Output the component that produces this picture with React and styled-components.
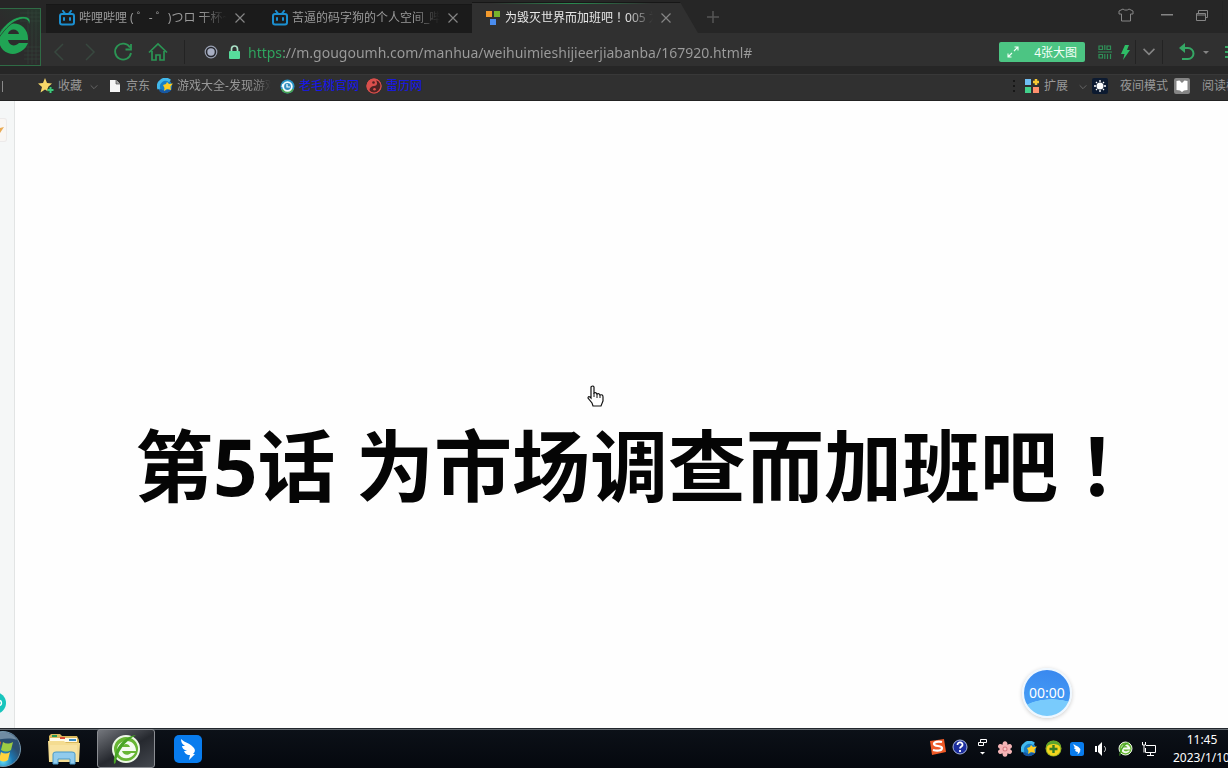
import React from 'react'
import styled, { createGlobalStyle } from 'styled-components'

const GlobalStyle = createGlobalStyle`
  * {
    box-sizing: border-box;
  }
  body {
    margin: 0;
    font-family: 'Noto Sans', 'Noto Sans CJK SC', sans-serif;
    font-size: 12px;
    background: #fefefe;
    overflow: hidden;
  }
  button {
    border: 0;
    padding: 0;
    background: none;
    font: inherit;
    color: inherit;
  }
  svg {
    display: block;
    flex-shrink: 0;
  }
`

const Screen = styled.div`
  display: flex;
  flex-direction: column;
  min-height: 100vh;
  overflow: hidden;
`

const Chrome = styled.header`
  background: #262626;
  color: #999999;
`

const TopArea = styled.div`
  display: grid;
  grid-template-columns: 41px minmax(0, 1fr);
  height: 66px;
`

const Logo = styled.button`
  margin-top: 8px;
  border: 1px solid #2f6b45;
  border-left: 0;
  background: linear-gradient(45deg, #2c2c2c 50%, #26372d 100%);
  overflow: hidden;
`

const Bars = styled.div`
  display: flex;
  flex-direction: column;
`

const TabStrip = styled.div`
  display: flex;
  align-items: flex-end;
  height: 33px;
  padding-left: 5px;
`

const Tab = styled.div`
  display: flex;
  align-items: center;
  position: relative;
  height: ${({ $active }) => ($active ? '31px' : '29px')};
  width: ${({ $active }) => ($active ? '226px' : '213px')};
  padding-left: 13px;
  padding-bottom: ${({ $active }) => ($active ? '1px' : '3px')};
  color: ${({ $active }) => ($active ? '#e8e8e8' : '#9a9a9a')};
  background: ${({ $active }) => ($active ? '#303030' : '#1b1b1b')};
  border-top: 1px solid #171717;
  clip-path: ${({ $active }) => ($active ? 'polygon(0 0, 208px 0, 100% 100%, 0 100%)' : 'none')};
`

const TabGlow = styled.span`
  position: absolute;
  top: 0;
  left: 20px;
  width: 160px;
  height: 1px;
  background: linear-gradient(90deg, transparent, #2a8a50, transparent);
`

const TabTitle = styled.span`
  width: 148px;
  margin: 0 8px 0 4px;
  line-height: 20px;
  white-space: nowrap;
  overflow: hidden;
  mask-image: linear-gradient(90deg, #000 82%, transparent 100%);
`

// full-width marks sit in the middle of their square in this family
const Mark = styled.span`
  font-family: 'Noto Sans CJK TC', sans-serif;
`

const IconButton = styled.button`
  display: flex;
  align-items: center;
  justify-content: center;
  flex-shrink: 0;
  gap: 8px;
  width: ${({ $width }) => $width || 30}px;
  height: 28px;
  color: ${({ $color }) => $color || '#858585'};
`

const WindowButtons = styled.div`
  display: flex;
  height: 30px;
  margin-left: auto;
  align-self: flex-start;
  padding-top: 1px;
`

const AddressBar = styled.div`
  display: flex;
  align-items: center;
  height: 33px;
  padding: 5px 0 0 4px;
  background: #303030;
`

const Divider = styled.span`
  width: 1px;
  height: 24px;
  margin: 0 ${({ $gap }) => $gap || 0}px;
  background: #232323;
`

const AddressField = styled.label`
  display: flex;
  align-items: center;
  flex: 1;
  min-width: 0;
  gap: 7px;
`

const AddressInput = styled.input`
  flex: 1;
  min-width: 0;
  height: 26px;
  padding: 0;
  border: 0;
  outline: 0;
  font-family: 'Noto Sans', sans-serif;
  font-size: 14px;
  color: transparent;
  background: linear-gradient(90deg, #2fa75f 36px, #9c9c9c 36px);
  background-clip: text;
`

const PictureButton = styled.button`
  display: flex;
  align-items: center;
  justify-content: space-between;
  width: 86px;
  height: 20px;
  margin-right: 10px;
  padding: 0 8px;
  border-radius: 2px;
  background: #4cc583;
  color: #f3fff8;
`

const BookmarkBar = styled.nav`
  display: flex;
  align-items: center;
  height: 27px;
  margin-top: 8px;
  padding: 0 0 3px 2px;
  background: #303030;
  border-top: 1px solid #383838;
  border-bottom: 1px solid #222222;
`

const Edge = styled.span`
  width: 1px;
  height: 11px;
  margin-right: 35px;
  background: #8a8a8a;
`

const Bookmark = styled.a`
  display: flex;
  align-items: center;
  flex-shrink: 0;
  gap: 4px;
  margin-right: 7px;
  color: ${({ $marked }) => ($marked ? '#1616f0' : '#999999')};
  line-height: 20px;
  text-decoration: none;
  white-space: nowrap;
`

const BookmarkArrow = styled.span`
  padding: 2px 2px 0 3px;
  color: #707070;
`

const FadedLabel = styled.span`
  width: 96px;
  overflow: hidden;
  mask-image: linear-gradient(90deg, #000 80%, transparent 98%);
`

const Extensions = styled.div`
  display: flex;
  align-items: center;
  margin-left: auto;
`

const Extension = styled.button`
  display: flex;
  align-items: center;
  gap: ${({ $gap }) => $gap}px;
  width: ${({ $width }) => $width}px;
  line-height: 20px;
  white-space: nowrap;
  overflow: hidden;
`

const Page = styled.main`
  display: flex;
  flex: 1;
  position: relative;
  background: #fefefe;
`

const SideRail = styled.aside`
  display: flex;
  flex-direction: column;
  justify-content: space-between;
  width: 15px;
  padding: 17px 0 14px;
  background: #f5f7f7;
  border-right: 1px solid #e2e4e4;
`

const RailTab = styled.button`
  width: 7px;
  height: 24px;
  border: 1px solid #eceaea;
  border-left: 0;
  border-radius: 0 3px 3px 0;
  background: #f9f6f3;
`

const Chapter = styled.article`
  flex: 1;
  padding: 303px 0 0 120px;
`

const ChapterTitle = styled.h1`
  margin: 0;
  font-family: 'Noto Sans', 'Noto Sans CJK SC', sans-serif;
  font-size: 78px;
  font-weight: 700;
  line-height: 116px;
  color: #050505;
  white-space: nowrap;
`

const Pointer = styled.svg`
  position: absolute;
  left: 587px;
  top: 284px;
`

const Timer = styled.button`
  position: absolute;
  right: 156px;
  bottom: 10px;
  width: 50px;
  height: 50px;
  border: 2px solid #eef7ff;
  border-radius: 50%;
  box-shadow: 0 1px 4px rgba(0, 0, 0, .2);
  background:
    radial-gradient(ellipse 34px 17px at 60% 100%, #79cbfc 97%, transparent 100%),
    linear-gradient(190deg, #3886ee, #4ba6f8);
  color: white;
  font-size: 14px;
  line-height: 46px;
`

const Taskbar = styled.footer`
  display: flex;
  height: 40px;
  background: linear-gradient(#0c1118, #05080e);
  border-top: 1px solid #22272d;
  box-shadow: inset 0 1px 0 #646a70;
  color: white;
`

const TaskButton = styled.button`
  display: flex;
  align-items: center;
  justify-content: center;
  width: ${({ $width }) => $width || 58}px;
  border: 1px solid ${({ $active }) => ($active ? '#8b8e93' : 'transparent')};
  border-radius: 3px;
  background: ${({ $active }) => ($active ? 'linear-gradient(150deg, #74777d, #26292f 52%, #43474e)' : 'none')};
  margin-right: ${({ $gap }) => $gap || 0}px;
`

const Tray = styled.div`
  display: flex;
  align-items: center;
  margin-left: auto;
`

const TrayButton = styled.button`
  display: flex;
  align-items: center;
  justify-content: center;
  width: ${({ $width }) => $width || 24}px;
  height: 30px;
  padding-bottom: ${({ $raised }) => ($raised ? '4px' : '0')};
`

const Clock = styled.time`
  width: 67px;
  padding-left: 12px;
  overflow: hidden;
  line-height: 18px;
  white-space: nowrap;
`

const ClockTime = styled.div`
  width: 58px;
  text-align: center;
`

const BilibiliIcon = () => (
  <svg width="16" height="16" viewBox="0 0 16 16" fill="none" stroke="#1b8fd0" strokeWidth="2" strokeLinecap="round">
    <rect x="1" y="4" width="14" height="10.5" rx="2" />
    <path d="M4 1l2 2.5M12 1l-2 2.5M5 8v2M11 8v2" />
  </svg>
)

const SquaresIcon = () => (
  <svg width="16" height="16" viewBox="0 0 16 16">
    <path d="M1 1h6v6H1z" fill="#f39a2d" />
    <path d="M9 1h6v6H9z" fill="#77b52c" />
    <path d="M5 9h6v6H5z" fill="#4a8cee" />
  </svg>
)

const CloseIcon = () => (
  <svg width="10" height="10" viewBox="0 0 10 10" stroke="currentColor" strokeWidth="1.2">
    <path d="M.5.5l9 9M9.5.5l-9 9" />
  </svg>
)

const ELogo = () => (
  <svg width="40" height="56" viewBox="0 0 40 56">
    <g stroke="#35493d" strokeWidth=".5">
      <path d="M28 1v54M32 1v54M36 1v54M20 4h20M20 8h20M20 12h20M24 38h16M24 42h16M24 46h16M24 50h16" />
    </g>
    <path d="M28 31H8c1 6 7 7 11 3h9c-3 8-12 13-20 10-11-4-12-20-4-26 10-8 25-2 24 13zM8 25h11c-1-6-10-6-11 0z" fill="#20a454" />
    <path d="M-2 27C4 14 17 5 27 8c3 1 4 4 2 8 0-4-2-6-6-6C14 11 6 18-2 30z" fill="#20a454" stroke="#2c2c2c" strokeWidth=".7" />
  </svg>
)

const Chevron = ({ d, size = 18, width = 1.5 }) => (
  <svg width={size} height={size} viewBox="0 0 18 18" fill="none" stroke="currentColor" strokeWidth={width}>
    <path d={d} />
  </svg>
)

const ReloadIcon = () => (
  <svg width="20" height="20" viewBox="0 0 20 20" fill="none" stroke="currentColor" strokeWidth="1.8">
    <path d="M17 5.5A8 8 0 1 0 18 11M18 2v5.5h-5.5" />
  </svg>
)

const HomeIcon = () => (
  <svg width="20" height="20" viewBox="0 0 20 20" fill="none" stroke="currentColor" strokeWidth="1.7">
    <path d="M1 10.5L10 2l9 8.5M4 9v9h4v-5h4v5h4V9" />
  </svg>
)

const BullseyeIcon = () => (
  <svg width="14" height="14" viewBox="0 0 14 14">
    <circle cx="7" cy="7" r="5.8" fill="#26282e" stroke="#99a0b2" strokeWidth="1.2" />
    <circle cx="7" cy="7" r="3.7" fill="#a8afc3" />
  </svg>
)

const LockIcon = () => (
  <svg width="13" height="14" viewBox="0 0 13 14">
    <path d="M3.5 7V4a3 3 0 0 1 6 0v3" fill="none" stroke="#a9dfc5" strokeWidth="1.7" />
    <rect x="1" y="6" width="11" height="8" rx="1" fill="#57dc9b" />
  </svg>
)

const ExpandIcon = () => (
  <svg width="12" height="12" viewBox="0 0 12 12" fill="none" stroke="currentColor" strokeWidth="1.1">
    <path d="M7 5l4-4M7.5 1H11v3.5M5 7l-4 4M1 7.5V11h3.5" />
  </svg>
)

const CodeIcon = () => (
  <svg width="14" height="14" viewBox="0 0 14 14" fill="none" stroke="#2f9158" strokeWidth="1.2">
    <path d="M1 1h3.5v3.5H1zM6.8 0v5M9 1h3.5v3.5H9zM0 7h14M1 9.5h3.5V13H1zM6.8 9v5M9.5 9v5M12.5 9v5" />
  </svg>
)

const BoltIcon = () => (
  <svg width="9" height="15" viewBox="0 0 9 15"><path d="M4 0h4L6 5h3L2 15l1.5-6H0z" fill="#2ebd66" /></svg>
)

const UndoIcon = () => (
  <svg width="17" height="18" viewBox="0 0 17 18" fill="none" stroke="#35a865" strokeWidth="2">
    <path d="M3 5h7a5.500 5.500 0 0 1 0 11H4" />
    <path d="M1 5l6-5v10z" fill="#35a865" stroke="none" />
  </svg>
)

const ShirtIcon = () => (
  <svg width="16" height="14" viewBox="0 0 16 14" fill="none" stroke="currentColor" strokeWidth="1">
    <path d="M5 1L1 3v3h2.5v7h9V6H15V3l-4-2c-1 1.5-5 1.5-6 0z" />
  </svg>
)

const RestoreIcon = () => (
  <svg width="12" height="11" viewBox="0 0 12 11" fill="none" stroke="currentColor">
    <path d="M.5 3.5h9v7h-9zM2.5 3V.5h9v7h-2M.5 5h9" />
  </svg>
)

const StarIcon = () => (
  <svg width="16" height="16" viewBox="0 0 16 16">
    <path d="M7 0l2 5 5 .5-4 3.500 1.500 5.500L7 11.500 2.500 14.500 4 9 0 5.500 5 5z" fill="#f7d869" />
    <path d="M12.500 9v6M9.500 12h6" stroke="#183c26" strokeWidth="3.500" />
    <path d="M12.500 9v6M9.500 12h6" stroke="#3fc77d" strokeWidth="2" />
  </svg>
)

const FileIcon = () => (
  <svg width="14" height="14" viewBox="0 0 14 14">
    <path d="M2 1h6l4 4v8H2z" fill="#f4f4f4" />
    <path d="M8 1v4h4" fill="#aaa" stroke="#303030" strokeWidth=".6" />
  </svg>
)

const GameIcon = () => (
  <svg width="16" height="16" viewBox="0 0 16 16">
    <circle cx="8" cy="8" r="7" fill="#187fc6" />
    <path d="M13 3A7 7 0 0 0 2 11" fill="none" stroke="#42b8eb" strokeWidth="3" />
    <path d="M3 12a7 7 0 0 0 11-2" fill="none" stroke="#1757a2" strokeWidth="2.500" />
    <path d="M6 7l3-1 1-2 2 2 4-.5-2.500 3L14 12l-4-1-3 2 .5-3z" fill="#ffcd22" />
  </svg>
)

const SwirlIcon = () => (
  <svg width="15" height="15" viewBox="0 0 15 15">
    <circle cx="7.500" cy="7.500" r="7" fill="#2793c5" />
    <path d="M1 10a7 7 0 0 0 13 0" fill="#4aa452" />
    <circle cx="7.500" cy="7.500" r="4.300" fill="#318fc2" stroke="#f2fcff" strokeWidth="1.800" />
    <path d="M7 5v3h3M3 5L2 8" fill="none" stroke="white" strokeWidth="1.200" />
  </svg>
)

const TaijiIcon = () => (
  <svg width="16" height="16" viewBox="0 0 16 16">
    <circle cx="8" cy="8" r="7.500" fill="#d94f4c" />
    <path d="M13.300 3a7.500 7.500 0 0 1-9 11.500C2 11 5 8 8 8s4-3 2-5.500z" fill="#4e2323" />
    <circle cx="7.500" cy="4.500" r="1.300" fill="#4e2323" />
    <circle cx="8.500" cy="11.200" r="1.300" fill="#d94f4c" />
    <circle cx="8" cy="8" r="7" fill="none" stroke="#d94f4c" strokeWidth="1.200" />
  </svg>
)

const AppsIcon = () => (
  <svg width="16" height="16" viewBox="0 0 16 16">
    <path d="M1 1h6v6H1z" fill="#70bff5" />
    <path d="M1 9h6v6H1z" fill="#42d18c" />
    <path d="M9 9h6v6H9z" fill="#ff906d" />
    <path d="M12 1v6M9 4h6" stroke="#f6c833" strokeWidth="2.500" />
  </svg>
)

const SunIcon = () => (
  <svg width="16" height="16" viewBox="0 0 16 16">
    <rect width="16" height="16" rx="2" fill="#0c1a30" />
    <circle cx="8" cy="8" r="3.500" fill="white" />
    <path d="M8 2v2M8 12v2M2 8h2M12 8h2M4 4l1 1M11 11l1 1M4 12l1-1M11 5l1-1" stroke="white" strokeWidth="1.300" />
  </svg>
)

const BookIcon = () => (
  <svg width="16" height="16" viewBox="0 0 16 16">
    <rect width="16" height="16" rx="2" fill="#858585" />
    <path d="M2.500 3l3-.5L8 5l2.500-2.500 3 .5v9l-3.500.5-2 1.500-2-1.500-3.500-.5z" fill="white" />
  </svg>
)

const WindowsOrb = () => (
  <svg width="22" height="38" viewBox="0 0 22 38">
    <defs>
      <radialGradient id="orb" cx="50%" cy="85%">
        <stop offset="0" stopColor="#5fdcf8" />
        <stop offset=".55" stopColor="#1d76b0" />
        <stop offset="1" stopColor="#2b4f70" />
      </radialGradient>
    </defs>
    <circle cx="3" cy="19" r="17.500" fill="url(#orb)" stroke="#7395ab" />
    <path d="M-8 5c8-6 20-3 25 5-8-3-16-1-25 1z" fill="#c6d8e2" opacity=".45" />
    <path d="M-8 12c3-2 6-2 9 0l-2 8c-3-2-6-2-9 0z" fill="#ed5d2b" />
    <path d="M3 12c3 2 6 2 10 0l-2 8c-3 2-6 2-10 0z" fill="#9ccc43" />
    <path d="M-9 21c3-2 6-2 9 0l-2 8c-3-2-6-1-8 0z" fill="#4ba8e5" />
    <path d="M1 22c3 2 6 2 9 0l-2 8c-3 2-6 2-9 0z" fill="#ffd23e" />
  </svg>
)

const FolderIcon = () => (
  <svg width="34" height="32" viewBox="0 0 34 32">
    <path d="M2 3l2-2h9l2 2h15l2 4v20H2z" fill="#d9b95e" />
    <path d="M3 5h27v4H3z" fill="#fffbe9" />
    <path d="M5 2h5v2H5z" fill="#299b55" />
    <path d="M13 4h5v2h-5z" fill="#d94a36" />
    <path d="M22 6h7v2h-7z" fill="#3b8dc5" />
    <path d="M1 8h16l2 2h14l-1 19H2z" fill="#f4dc91" />
    <path d="M3 12h27v15H3z" fill="#f9e6a8" opacity=".7" />
    <path d="M6 31V21q0-2 3-2h16q3 0 3 2v10h-5v-5H11v5z" fill="#91cbed" stroke="#4b99c7" />
  </svg>
)

const BrowserIcon = ({ size }) => (
  <svg width={size} height={size} viewBox="0 0 30 30">
    <circle cx="15" cy="15" r="13" fill="#67b534" stroke="#edf8e7" strokeWidth="2" />
    <path d="M25 17H11c1 4 6 5 9 2h4c-4 7-14 7-17 0-3-8 3-12 9-12 5 0 9 4 9 10zm-6-4c-1-4-7-4-8 0z" fill="#f4fbf0" />
    <path d="M3 30C2 17 11 3 25 1 13 8 7 17 4.500 29z" fill="#48a526" />
  </svg>
)

const BirdIcon = ({ size }) => (
  <svg width={size} height={size} viewBox="0 0 28 28">
    <rect width="28" height="28" rx="5" fill="#087cee" />
    <path d="M7 4c4 4 9 4 12 8 3 3 2 5 0 7h2l-6 6 1-5c-4 0-5-2-6-4h3c-3-1-5-3-5-5h3C8 9 7 7 7 4z" fill="white" />
  </svg>
)

const SogouIcon = () => (
  <svg width="16" height="16" viewBox="0 0 16 16">
    <path d="M0 2l14-2 2 13-14 3z" fill="#ef5a27" />
    <path d="M12 3C8 2 4 3 4 5c0 3 8 1 8 4 0 3-5 3-9 2" fill="none" stroke="white" strokeWidth="2.200" />
  </svg>
)

const HelpIcon = () => (
  <svg width="16" height="16" viewBox="0 0 16 16" fill="none" stroke="white">
    <circle cx="8" cy="8" r="7" fill="#1c2d9e" stroke="#a5b3db" />
    <path d="M5.500 6c0-4 5.500-3 5 0 0 1.500-2.500 1.500-2.500 3.500M8 11v2" strokeWidth="1.800" />
  </svg>
)

const TrayMenuIcon = () => (
  <svg width="9" height="18" viewBox="0 0 9 18" fill="none" stroke="white">
    <path d="M.5 4.500h5v3h-5zM2.500 4V1.500h6v3h-3" />
    <path d="M2 14h5l-2.500 2.500z" fill="white" stroke="none" />
  </svg>
)

const FlowerIcon = () => (
  <svg width="16" height="16" viewBox="0 0 16 16" fill="#f4b3b5">
    {[0, 60, 120, 180, 240, 300].map((angle) => (
      <ellipse key={angle} cx="8" cy="3.800" rx="2.500" ry="3.500" transform={`rotate(${angle} 8 8)`} />
    ))}
    <circle cx="8" cy="8" r="2.500" fill="#d67880" />
    <path d="M6.500 8h3M8 6.500v3" stroke="#ffe6df" />
  </svg>
)

const GuardIcon = () => (
  <svg width="17" height="17" viewBox="0 0 17 17">
    <circle cx="8.500" cy="8.500" r="8" fill="#8fae22" />
    <circle cx="8.500" cy="9" r="6.800" fill="#f4d51e" />
    <path d="M1 7a7.600 7.600 0 0 1 15 0c-4-4-11-4-15 0z" fill="#5aa52e" />
    <path d="M8.500 5v8M4.500 9h8" stroke="#347d25" strokeWidth="2.400" />
  </svg>
)

const SpeakerIcon = () => (
  <svg width="14" height="16" viewBox="0 0 14 16">
    <path d="M1 5h2v6H1zM4 5l4-4v14l-4-4z" fill="white" />
    <path d="M10 5c2 2 2 4 0 6" fill="none" stroke="#ddd" />
  </svg>
)

const NetworkIcon = () => (
  <svg width="16" height="16" viewBox="0 0 16 16" fill="none" stroke="white">
    <path d="M5 4.500h9.500v7H4.500V7M9.500 12v2M6 14.500h7M1.500 1v3h3V1M3 4v7.500" />
  </svg>
)

const tabs = [
  { id: 'home', title: '哔哩哔哩 ( ゜- ゜)つロ 干杯~-bilibili', Icon: BilibiliIcon },
  { id: 'space', title: '苦逼的码字狗的个人空间_哔哩哔哩', Icon: BilibiliIcon },
  { id: 'comic', title: <>为毁灭世界而加班吧<Mark>！</Mark>005 为市场</>, Icon: SquaresIcon, active: true },
]

const trayItems = [
  { label: '输入法', Icon: SogouIcon, width: 22, raised: true },
  { label: '帮助', Icon: HelpIcon, width: 22, raised: true },
  { label: '选项', Icon: TrayMenuIcon, width: 22, raised: true },
  { label: '樱花', Icon: FlowerIcon },
  { label: '游戏', Icon: GameIcon },
  { label: '安全卫士', Icon: GuardIcon },
  { label: '钉钉', Icon: () => <BirdIcon size={14} /> },
  { label: '音量', Icon: SpeakerIcon },
  { label: '浏览器', Icon: () => <BrowserIcon size={15} /> },
  { label: '网络', Icon: NetworkIcon },
]

const App = () => (
  <Screen>
    <GlobalStyle />
    <Chrome>
      <TopArea>
        <Logo aria-label="浏览器"><ELogo /></Logo>
        <Bars>
          <TabStrip>
            {tabs.map(({ id, title, Icon, active }) => (
              <Tab key={id} $active={active}>
                {active && <TabGlow />}
                <Icon />
                <TabTitle>{title}</TabTitle>
                <IconButton $width={10} aria-label="关闭"><CloseIcon /></IconButton>
              </Tab>
            ))}
            <IconButton $color="#555555" aria-label="新标签页">
              <svg width="12" height="16" viewBox="0 0 12 16" stroke="currentColor" strokeWidth="1.500">
                <path d="M6 0v12M0 6h12" />
              </svg>
            </IconButton>
            <WindowButtons>
              <IconButton $width={40} aria-label="皮肤"><ShirtIcon /></IconButton>
              <IconButton $width={41} aria-label="最小化">
                <svg width="12" height="2" viewBox="0 0 12 2"><path d="M0 0h12v1.500H0z" fill="currentColor" /></svg>
              </IconButton>
              <IconButton $width={30} aria-label="还原"><RestoreIcon /></IconButton>
              <Divider $gap={5} />
            </WindowButtons>
          </TabStrip>
          <AddressBar>
            <IconButton $color="#38483f" aria-label="后退"><Chevron d="M12 1L4 9l8 8" /></IconButton>
            <IconButton $color="#38483f" aria-label="前进"><Chevron d="M5 1l8 8-8 8" /></IconButton>
            <IconButton $width={36} $color="#2b9554" aria-label="刷新"><ReloadIcon /></IconButton>
            <IconButton $width={34} $color="#2b9554" aria-label="主页"><HomeIcon /></IconButton>
            <Divider $gap={9} />
            <IconButton $width={34} aria-label="网站信息"><BullseyeIcon /></IconButton>
            <AddressField>
              <LockIcon />
              <AddressInput
                aria-label="地址"
                defaultValue="https://m.gougoumh.com/manhua/weihuimieshijieerjiabanba/167920.html#"
              />
            </AddressField>
            <PictureButton><ExpandIcon />4张大图</PictureButton>
            <IconButton $width={20} aria-label="二维码"><CodeIcon /></IconButton>
            <IconButton $width={20} aria-label="加速"><BoltIcon /></IconButton>
            <Divider />
            <IconButton $width={26} aria-label="展开"><Chevron d="M2 5l7 7 7-7" size={14} width={2} /></IconButton>
            <Divider />
            <IconButton $width={60} aria-label="恢复">
              <UndoIcon />
              <svg width="6" height="3" viewBox="0 0 6 3"><path d="M0 0h6L3 3z" fill="currentColor" /></svg>
            </IconButton>
            <svg width="5" height="14" viewBox="0 0 5 14" stroke="#35a865" strokeWidth="2">
              <path d="M2 2h4M2 7h4M2 12h4" />
            </svg>
          </AddressBar>
        </Bars>
      </TopArea>
      <BookmarkBar>
        <Edge />
        <Bookmark href="#">
          <StarIcon />收藏
          <BookmarkArrow><Chevron d="M3 6l6 6 6-6" size={10} /></BookmarkArrow>
        </Bookmark>
        <Bookmark href="#"><FileIcon />京东</Bookmark>
        <Bookmark href="#"><GameIcon /><FadedLabel>游戏大全-发现游戏</FadedLabel></Bookmark>
        <Bookmark href="#" $marked><SwirlIcon />老毛桃官网</Bookmark>
        <Bookmark href="#" $marked><TaijiIcon />雷历网</Bookmark>
        <Extensions>
          <Extension $width={62} $gap={4}>
            <svg width="7" height="16" viewBox="0 0 7 16" fill="#171717"><path d="M0 2h2v2H0zM0 7h2v2H0zM0 12h2v2H0z" /></svg>
            <AppsIcon />扩展
          </Extension>
          <Extension $width={17} $gap={0} aria-label="更多扩展">
            <BookmarkArrow><Chevron d="M3 6l6 6 6-6" size={10} /></BookmarkArrow>
          </Extension>
          <Extension $width={82} $gap={12}><SunIcon />夜间模式</Extension>
          <Extension $width={54} $gap={12}><BookIcon />阅读模式</Extension>
        </Extensions>
      </BookmarkBar>
    </Chrome>
    <Page>
      <SideRail>
        <RailTab aria-label="收藏夹">
          <svg width="4" height="10" viewBox="0 0 4 10"><path d="M0 3l4-1-2 3-2 3z" fill="#e9aa53" /></svg>
        </RailTab>
        <svg width="7" height="22" viewBox="0 0 7 22">
          <circle cx="-5" cy="11" r="11" fill="#18c5bd" />
          <circle cx="-1" cy="11" r="2.500" fill="none" stroke="white" strokeWidth="1.500" />
        </svg>
      </SideRail>
      <Chapter>
        <ChapterTitle>第5话 为市场调查而加班吧<Mark>！</Mark></ChapterTitle>
      </Chapter>
      <Pointer width="18" height="22" viewBox="0 0 18 22">
        <path
          d="M4 2q2-2 3 0v6q2-1 3 1 2-1 3 1 3-1 3 2v4l-2 5H6l-1-3-4-5q0-2 2-1l1 1z"
          fill="white"
          stroke="#111"
          strokeWidth="1.200"
        />
        <path d="M7 8v4M10 9v4M13 10v3" stroke="#111" />
      </Pointer>
      <Timer>00:00</Timer>
    </Page>
    <Taskbar>
      <TaskButton $width={22} $gap={13} aria-label="开始"><WindowsOrb /></TaskButton>
      <TaskButton $gap={4} aria-label="资源管理器"><FolderIcon /></TaskButton>
      <TaskButton $active $gap={4} aria-label="浏览器"><BrowserIcon size={30} /></TaskButton>
      <TaskButton aria-label="钉钉"><BirdIcon size={28} /></TaskButton>
      <Tray>
        {trayItems.map(({ label, Icon, width, raised }) => (
          <TrayButton key={label} $width={width} $raised={raised} aria-label={label}><Icon /></TrayButton>
        ))}
        <Clock>
          <ClockTime>11:45</ClockTime>
          2023/1/10
        </Clock>
      </Tray>
    </Taskbar>
  </Screen>
)

export default App
